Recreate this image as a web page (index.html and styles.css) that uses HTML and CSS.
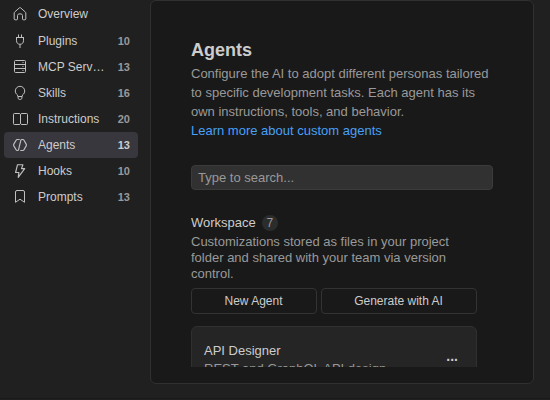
FILE: index.html
```html
<!DOCTYPE html>
<html lang="en">
<head>
<meta charset="utf-8">
<title>Agents</title>
<link rel="stylesheet" href="styles.css">
</head>
<body>
<div class="app">
  <nav class="sidebar">
    <a class="item overview"><svg class="icon" viewBox="0 0 16 16"><path d="M2.200 6.900Q2.200 6.500 2.600 6.100L7.300 1.900q.7-.6 1.400 0l4.700 4.200q.4.400.4.800v6q0 .9-.9.900h-1.500q-.9 0-.9-.9V9.500Q10.500 7.800 8 7.800T5.500 9.500v3.400q0 .9-.9.900H3.100q-.9 0-.9-.9z"/></svg><span class="label">Overview</span></a>
    <a class="item"><svg class="icon" viewBox="0 0 16 16"><path d="M6.500 1.500v3M9.500 1.500v3M4 4.500h8M4.500 4.500v3.200c0 2.200 1.400 3.600 3.500 3.600s3.500-1.400 3.500-3.600V4.500M8 11.300V15"/></svg><span class="label">Plugins</span><span class="count">10</span></a>
    <a class="item"><svg class="icon" viewBox="0 0 16 16"><rect x="2.500" y="1.500" width="11" height="12" rx="1"/><path d="M2.500 5.500h11M2.500 9.500h11M10.500 3.500h1M10.500 7.500h1M10.500 11.500h1"/></svg><span class="label">MCP Servers</span><span class="count">13</span></a>
    <a class="item"><svg class="icon" viewBox="0 0 16 16"><path d="M5.900 11.500 5.400 9.800C4 8.900 3.300 7.500 3.300 6a4.700 4.700 0 0 1 9.400 0c0 1.500-.7 2.900-2.100 3.800l-.5 1.700zM5.900 11.500l.4 2q.2.900 1 .9h1.400q.8 0 1-.9l.4-2"/></svg><span class="label">Skills</span><span class="count">16</span></a>
    <a class="item"><svg class="icon" viewBox="0 0 16 16"><path d="M8.500 3.500q-.4-1-1.500-1H2.400q-.9 0-.9.900v9.200q0 .9.900.9H7q1.100 0 1.500-1 .4 1 1.500 1H14.600q.9 0 .9-.9V3.400q0-.9-.9-.9H10q-1.100 0-1.500 1v9"/></svg><span class="label">Instructions</span><span class="count">20</span></a>
    <a class="item active"><svg class="icon bold" viewBox="0 0 16 16"><path d="M7.700 2.500H5.300q-.8 0-1.200.7L1.700 7.400q-.3.600 0 1.200l2.400 4.200q.4.700 1.200.7h.3q.8 0 1-.8l2.200-9.400q.2-.8 1-.8h1q.8 0 1.200.7l2.300 4.200q.3.600 0 1.200L12 12.800q-.4.700-1.200.7H8.300"/></svg><span class="label">Agents</span><span class="count">13</span></a>
    <a class="item"><svg class="icon bold" viewBox="0 0 16 16"><path d="M5.500 1.700h5.400L9.500 5.600H12.700L6.200 14.300l.7-4.800H3.600z"/></svg><span class="label">Hooks</span><span class="count">10</span></a>
    <a class="item"><svg class="icon" viewBox="0 0 16 16"><path d="M3.500 13.300V3q0-1.500 1.500-1.500h6q1.500 0 1.500 1.500v10.300L8 10.200z"/></svg><span class="label">Prompts</span><span class="count">13</span></a>
  </nav>
  <main class="panel">
    <div class="scroll">
      <h1>Agents</h1>
      <p class="intro">Configure the AI to adopt different personas tailored to specific development tasks. Each agent has its own instructions, tools, and behavior.<br><a class="link">Learn more about custom agents</a></p>
      <input class="search" type="text" placeholder="Type to search...">
      <section class="group">
        <h2>Workspace <span class="badge">7</span></h2>
        <p class="desc">Customizations stored as files in your project folder and shared with your team via version control.</p>
        <div class="actions"><button class="new">New Agent</button><button class="generate">Generate with AI</button></div>
        <article class="card">
          <div class="info"><div class="name">API Designer</div><div class="detail">REST and GraphQL API design</div></div>
          <span class="more">...</span>
        </article>
      </section>
    </div>
  </main>
</div>
</body>
</html>
```
FILE: styles.css
```css
* { box-sizing: border-box; }
body {
  margin: 0;
  height: 400px;
  overflow: hidden;
  background: #202020;
  color: #ccc;
  font-family: "Liberation Sans", Arial, sans-serif;
  font-size: 13px;
}
.app { display: flex; height: 399px; border-bottom: 1px solid #191919; }
.sidebar { width: 150px; padding: 1px 12px 0 4px; font-size: 12px; }
.item {
  display: flex;
  align-items: center;
  height: 26px;
  padding: 0 8px;
  border-radius: 4px;
}
.overview { margin-bottom: 1px; }
.icon {
  width: 16px;
  height: 16px;
  flex: none;
  margin-right: 10px;
  fill: none;
  stroke: #c0c0c0;
  stroke-width: 1;
  stroke-linejoin: round;
}
.bold { stroke-width: 1.15; }
.label { flex: 1; overflow: hidden; text-overflow: ellipsis; white-space: nowrap; }
.count { margin-left: 12px; color: #999; font-size: 11px; font-weight: bold; }
.active { background: #38373e; }
.active .count { color: #ccc; }
.panel {
  width: 384px;
  height: 384px;
  padding: 38px 40px 16px;
  border: 1px solid #303031;
  border-radius: 6px;
  background: #191919;
}
.scroll { height: 328px; overflow: hidden; }
h1 { margin: 0; padding-top: 1px; font-size: 18px; line-height: 21px; }
.intro { margin: 3px 0 0; color: #999; line-height: 19px; }
.link { color: #48a0f7; }
.search {
  display: block;
  width: 302px;
  height: 25px;
  margin-top: 25px;
  padding: 0 6px;
  border: 1px solid #3b3b3c;
  border-radius: 4px;
  background: #313131;
  color: #ccc;
  font: 13px "Liberation Sans", sans-serif;
}
.search::placeholder { color: #999; }
.group { width: 286px; margin-top: 25px; }
h2 {
  display: flex;
  align-items: center;
  gap: 6px;
  height: 16px;
  margin: 0;
  padding-bottom: 1px;
  font-size: 13px;
  font-weight: normal;
  line-height: 16px;
}
.badge { flex: none; width: 16px; height: 16px; margin-top: 1px; border-radius: 50%; background: #2b2c2c; color: #999; font-size: 12px; line-height: 16px; text-align: center; }
.desc { margin: 3px 0 0; color: #999; line-height: 16px; }
.actions { display: flex; gap: 4px; margin-top: 6px; }
button { height: 26px; padding: 0 1px 0 0; border: 1px solid #333334; border-radius: 4px; background: transparent; color: #ccc; font: 12px "Liberation Sans", sans-serif; }
.new { width: 126px; }
.generate { width: 156px; }
.card {
  display: flex;
  justify-content: space-between;
  height: 72px;
  margin-top: 12px;
  padding: 16px 18px 12px 12px;
  border: 1px solid #303031;
  border-radius: 6px;
  background: #252525;
}
.name { line-height: 16px; }
.detail { margin-top: 2px; color: #999; line-height: 16px; }
.more { margin-top: 5px; font-size: 14px; font-weight: bold; line-height: 16px; }
```
